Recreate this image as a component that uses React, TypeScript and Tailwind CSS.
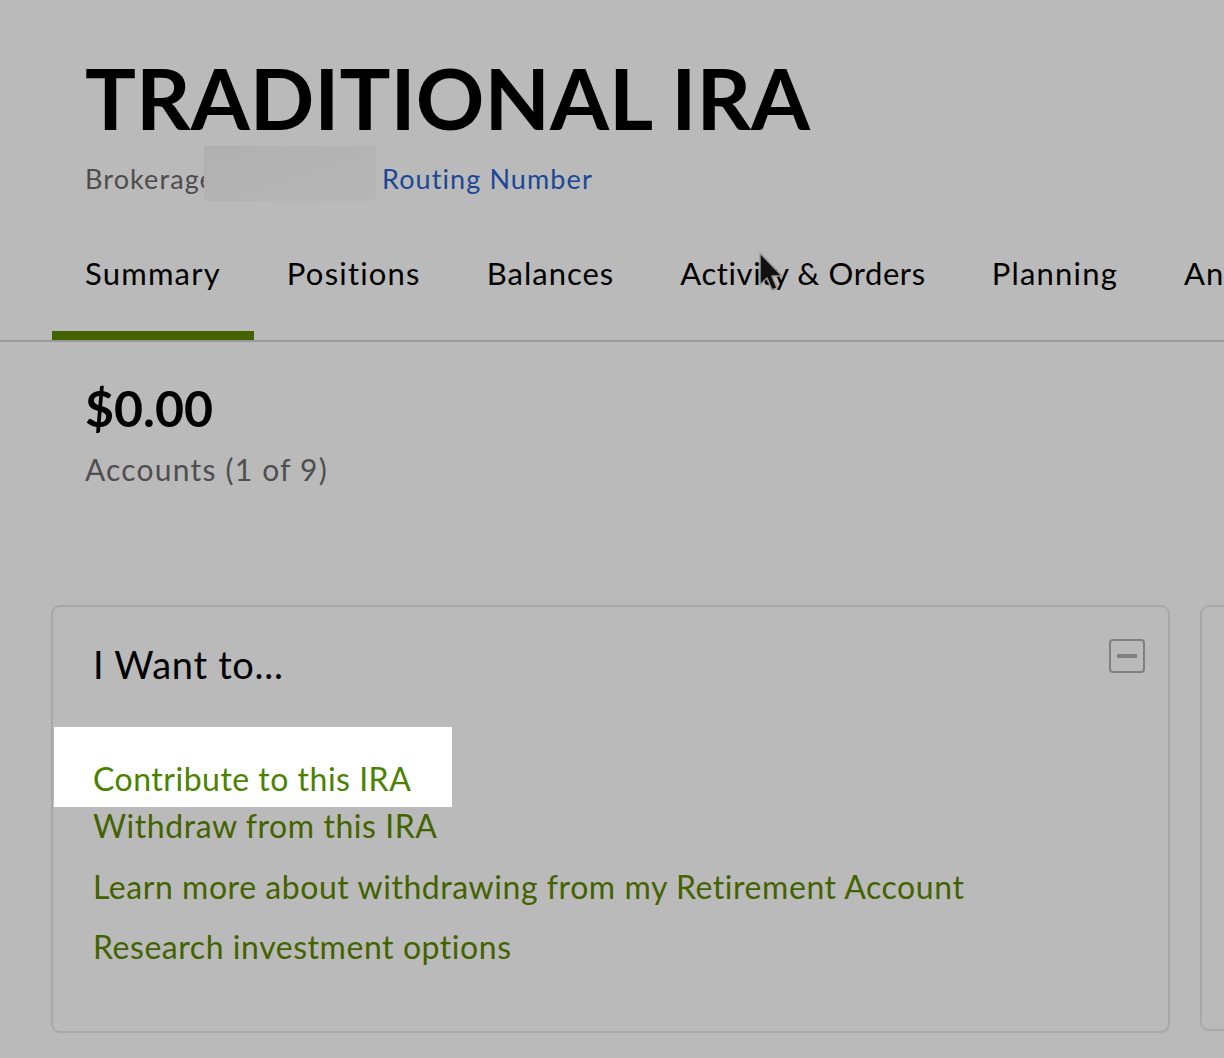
const tabs = [
  { label: "Summary", track: "tracking-[1.2px]" },
  { label: "Positions", track: "tracking-[1.2px]" },
  { label: "Balances", track: "tracking-[1px]" },
  { label: "Activity & Orders", track: "tracking-[0.6px]" },
  { label: "Planning", track: "tracking-[1.2px]" },
  { label: "Analysis", track: "tracking-[1.2px]" },
];

const links = [
  { label: "Withdraw from this IRA", mt: "mt-0" },
  { label: "Learn more about withdrawing from my Retirement Account", mt: "mt-[23px]" },
  { label: "Research investment options", mt: "mt-[22px]" },
];

function Cursor() {
  return (
    <svg
      className="absolute left-[758px] top-[252px]"
      width="26"
      height="44"
      viewBox="0 0 26 44"
    >
      <path
        d="M2 1 L2 33 L9 26 L14 38 L19 36 L14 24 L24 24 Z"
        fill="#111"
        stroke="#9a9a9a"
        strokeWidth="1.5"
        strokeLinejoin="round"
      />
    </svg>
  );
}

export default function App() {
  return (
    <div className="relative w-[1224px] h-[1058px] overflow-hidden bg-[#bababa] font-['Lato','Liberation_Sans',sans-serif]">
      <header className="px-[85px] pt-[55px]">
        <h1 className="text-[85px] leading-[85px] font-bold text-black whitespace-nowrap">
          TRADITIONAL IRA
        </h1>
        <div className="relative mt-[23px] flex text-[27px] leading-[32px] tracking-[1.1px]">
          <span className="w-[297px] text-[#4d4d4d]">Brokerage</span>
          <span className="text-[#1a4896]">Routing Number</span>
          <div className="absolute left-[119px] top-[-17px] w-[172px] h-[55px] bg-gradient-to-br from-[#b0b0b0] to-[#b6b6b6]" />
        </div>
      </header>

      <nav className="mt-[60px] flex overflow-hidden border-b-2 border-[#9a9a9a] pl-[52px]">
        {tabs.map((t, i) => (
          <div
            key={t.label}
            className={`-mb-[2px] shrink-0 px-[33px] pb-[40px] text-[31px] leading-[36px] ${t.track} text-black whitespace-nowrap border-b-[11px] ${
              i === 0 ? "border-[#436300]" : "border-transparent"
            }`}
          >
            {t.label}
          </div>
        ))}
      </nav>

      <section className="px-[85px] mt-[36px]">
        <div className="text-[50px] leading-[60px] font-bold text-black">$0.00</div>
        <div className="mt-[14px] text-[30px] leading-[34px] tracking-[1.2px] text-[#4f4f4f]">
          Accounts (1 of 9)
        </div>
      </section>

      <div className="mt-[119px] flex gap-[30px] pl-[51px]">
        <div className="w-[1119px] shrink-0 rounded-[9px] border-2 border-[#a8a8a8] pt-[35px] pb-[65px]">
          <div className="flex items-start justify-between pl-[40px] pr-[23px]">
            <h2 className="text-[38px] leading-[44px] tracking-[0.7px] text-black">I Want to...</h2>
            <button className="mt-[-3px] flex h-[34px] w-[36px] items-center justify-center rounded-[4px] border-2 border-[#808080]">
              <span className="block h-[4px] w-[20px] bg-[#808080]" />
            </button>
          </div>
          <div className="mt-[41px] ml-px w-[398px] bg-white pt-[33px] pb-[9px] pl-[39px]">
            <a className="block text-[32px] leading-[38px] tracking-[0.5px] text-[#4b8200] whitespace-nowrap">
              Contribute to this IRA
            </a>
          </div>
          {links.map((l) => (
            <a
              key={l.label}
              className={`block ${l.mt} pl-[40px] text-[32px] leading-[38px] tracking-[0.55px] text-[#436300] whitespace-nowrap`}
            >
              {l.label}
            </a>
          ))}
        </div>
        <div className="w-[400px] h-[426px] shrink-0 rounded-[9px] border-2 border-[#a8a8a8]" />
      </div>

      <Cursor />
    </div>
  );
}
